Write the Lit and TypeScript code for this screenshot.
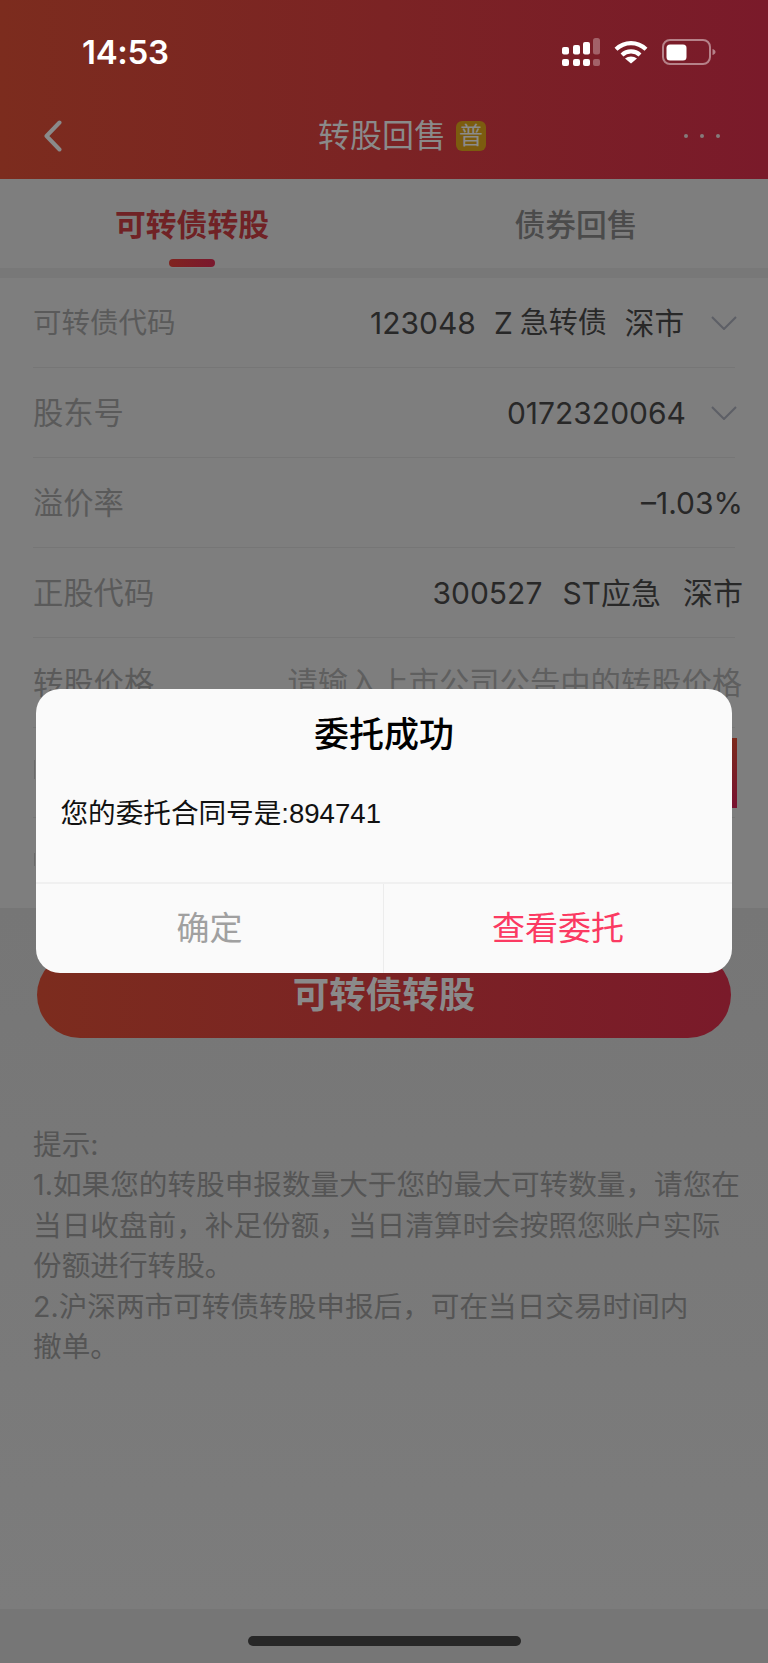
import { LitElement, html, css, svg } from "lit";
import { customElement } from "lit/decorators.js";

const chevron = html`<svg class="chev" width="26" height="14" viewBox="0 0 26 14"><path d="M1 1 L13 13 L25 1" fill="none" stroke="#5d5f66" stroke-width="2"/></svg>`;

const signalBars = [
  [0, 9, 7.5], [11, 7, 9.5], [21, 4, 12.5],
];
const signal = html`<svg width="38" height="28" viewBox="0 0 38 28">
  ${signalBars.map(([x, y, h]) => svg`<rect x=${x} y=${y} width="7" height=${h} rx="2" fill="#fff"/>`)}
  ${[0, 11, 21].map((x) => svg`<rect x=${x} y="21" width="7" height="7" rx="2" fill="#fff"/>`)}
  <rect x="31" y="0" width="7" height="16.5" rx="2.5" fill="#fff" fill-opacity=".3"/>
  <rect x="31" y="21" width="7" height="7" rx="2" fill="#fff" fill-opacity=".3"/>
</svg>`;

const wifi = html`<svg width="34" height="24" viewBox="0 0 34 24">
  <path d="M2 9.2 C10.5 1 23.5 1 32 9.2" fill="none" stroke="#fff" stroke-width="4.2"/>
  <path d="M8 15 C13 10.2 21 10.2 26 15" fill="none" stroke="#fff" stroke-width="4.2"/>
  <path d="M17 23.5 L11 18.6 C14.4 15.8 19.6 15.8 23 18.6 Z" fill="#fff"/>
</svg>`;

const battery = html`<svg width="54" height="26" viewBox="0 0 54 26">
  <rect x="1" y="1" width="47" height="24" rx="7" fill="none" stroke="#fff" stroke-opacity=".45" stroke-width="2"/>
  <rect x="4.5" y="5.5" width="20" height="16" rx="3.5" fill="#fff"/>
  <path d="M50.5 10 C52.5 10.6 53.5 11.6 53.5 13 C53.5 14.4 52.5 15.4 50.5 16 Z" fill="#fff" fill-opacity=".45"/>
</svg>`;

@customElement("app-root")
export class AppRoot extends LitElement {
  static styles = css`
    :host {
      display: block;
      position: relative;
      width: 768px;
      height: 1663px;
      overflow: hidden;
      background: #7a7a7a;
      font-family: "Inter", "Noto Sans CJK SC", sans-serif;
    }
    .page { display: flex; flex-direction: column; height: 100%; }
    .header {
      height: 179px;
      flex: none;
      background: linear-gradient(90deg, #7c2c1e, #7a1a2a);
    }
    .status {
      height: 104px;
      display: flex;
      align-items: center;
      justify-content: space-between;
      padding: 0 52px 0 82px;
      box-sizing: border-box;
    }
    .time {
      color: #fff;
      font-family: "Inter", sans-serif;
      font-size: 33px;
      font-weight: 600;
      letter-spacing: -0.3px;
      line-height: 40px;
    }
    .icons { display: flex; align-items: center; gap: 14px; }
    .icons svg { display: block; }
    .nav {
      height: 75px;
      padding: 0 48px 12px 44px;
      box-sizing: border-box;
      display: grid;
      grid-template-columns: 1fr auto 1fr;
      align-items: center;
    }
    .nav svg { display: block; }
    .title {
      position: relative;
      font-size: 32px;
      line-height: 44px;
      color: #8a8a8a;
    }
    .badge {
      position: absolute;
      left: calc(100% + 10px);
      top: 7px;
      width: 30px;
      height: 30px;
      border-radius: 6px;
      background: #7c5c0f;
      color: #8b8b8b;
      font-size: 24px;
      line-height: 30px;
      text-align: center;
    }
    .dots { justify-self: end; display: flex; gap: 12px; }
    .dots i { width: 4px; height: 4px; border-radius: 50%; background: #857b7b; }
    .tabs { height: 89px; flex: none; display: flex; background: #7e7e7e; }
    .tab {
      flex: 1;
      display: flex;
      flex-direction: column;
      align-items: center;
      padding-top: 25px;
      box-sizing: border-box;
      font-size: 30.8px;
      line-height: 42px;
      font-weight: 500;
      color: #4b4b4b;
    }
    .tab.on { color: #702225; font-weight: 700; }
    .tab u {
      display: block;
      width: 46px;
      height: 8px;
      margin-top: 13px;
      border-radius: 4px;
      background: linear-gradient(90deg, #80241f, #7a182e);
    }
    .band { height: 10px; flex: none; background: #787878; }
    .form { flex: none; background: #7e7e7e; padding: 0 33px; }
    .row {
      height: 90px;
      box-sizing: border-box;
      border-bottom: 1px solid #767676;
      display: flex;
      align-items: center;
      justify-content: space-between;
      font-size: 30px;
      line-height: 40px;
      white-space: nowrap;
    }
    .row.last { border-bottom: none; }
    .label { color: #5a5a5a; font-size: 30.3px; }
    .label.fit { font-size: 28.5px; }
    .value {
      color: #282828;
      display: flex;
      align-items: center;
      margin-right: -8px;
    }
    .value.select { margin-right: -2px; }
    .value .chev { margin-left: 25px; }
    .value.wide .chev { margin-left: 27px; }
    .wide .cjk { font-size: 29px; }
    .wide .cjk.market { font-size: 29.6px; margin-left: 18px; }
    .wide .z { margin-left: 18px; margin-right: 7px; }
    .sp20 { margin-left: 20px; }
    .sp22 { margin-left: 22px; }
    .placeholder { color: #5f5f5f; font-size: 30.3px; margin-right: -7px; }
    .tick { width: 1px; margin-left: 1px; background: #6a6a6a; }
    .tick.a { height: 19px; margin-top: -6px; }
    .tick.b { height: 13px; margin-top: -8px; }
    .mini {
      width: 120px;
      height: 70px;
      margin-right: -2px;
      background: linear-gradient(180deg, #7c2a1c, #781230);
    }
    .lower {
      flex: 1;
      background: linear-gradient(180deg, #767676, #7c7c7c);
      padding: 44px 30px 0 33px;
      box-sizing: border-box;
    }
    .submit {
      width: 694px;
      height: 86px;
      margin-left: 4px;
      border-radius: 43px;
      background: linear-gradient(90deg, #7c2c1e, #7a1a2a);
      color: #8a8a8a;
      font-size: 36.5px;
      font-weight: 700;
      line-height: 86px;
      text-align: center;
    }
    .notes {
      margin-top: 87px;
      color: #555;
      font-size: 28.63px;
      line-height: 40.4px;
      white-space: nowrap;
    }
    .home {
      height: 54px;
      flex: none;
      background: #767676;
      padding-top: 27px;
      box-sizing: border-box;
      display: flex;
      justify-content: center;
    }
    .home i { width: 273px; height: 10px; border-radius: 5px; background: #272727; }
    .dialog {
      position: absolute;
      left: 36px;
      top: 689px;
      width: 696px;
      height: 284px;
      border-radius: 24px;
      background: #fafafa;
      display: flex;
      flex-direction: column;
      overflow: hidden;
    }
    .d-title {
      padding-top: 22px;
      font-size: 35px;
      line-height: 46px;
      font-weight: 500;
      color: #000;
      text-align: center;
    }
    .d-body {
      flex: 1;
      padding: 37px 24.5px 0;
      font-family: "Liberation Sans", "Noto Sans CJK SC", sans-serif;
      font-size: 27.6px;
      line-height: 40px;
      color: #111;
    }
    .d-actions {
      height: 91px;
      flex: none;
      display: flex;
      border-top: 2px solid #f0f0f0;
      box-sizing: border-box;
      font-size: 33px;
      line-height: 88px;
      text-align: center;
    }
    .d-actions div { flex: 1; }
    .d-actions .ok { color: #a0a0a0; border-right: 1px solid #ececec; width: 348px; flex: none; box-sizing: border-box; }
    .d-actions .view { color: #fb3a62; }
  `;

  render() {
    return html`
      <div class="page">
        <div class="header">
          <div class="status">
            <div class="time">14:53</div>
            <div class="icons">${signal}${wifi}${battery}</div>
          </div>
          <div class="nav">
            <svg width="18" height="32" viewBox="0 0 18 32"><path d="M15.5 2.5 L2.5 16 L15.5 29.5" fill="none" stroke="#8a8a8a" stroke-width="4" stroke-linecap="round" stroke-linejoin="round"/></svg>
            <div class="title">转股回售<span class="badge">普</span></div>
            <div class="dots"><i></i><i></i><i></i></div>
          </div>
        </div>
        <div class="tabs">
          <div class="tab on">可转债转股<u></u></div>
          <div class="tab">债券回售</div>
        </div>
        <div class="band"></div>
        <div class="form">
          <div class="row">
            <span class="label fit">可转债代码</span>
            <span class="value select wide">123048<span class="z">Z</span><span class="cjk">急转债</span><span class="cjk market">深市</span>${chevron}</span>
          </div>
          <div class="row">
            <span class="label">股东号</span>
            <span class="value select">0172320064${chevron}</span>
          </div>
          <div class="row">
            <span class="label">溢价率</span>
            <span class="value">–1.03%</span>
          </div>
          <div class="row">
            <span class="label">正股代码</span>
            <span class="value">300527<span class="sp20">ST应急</span><span class="sp22">深市</span></span>
          </div>
          <div class="row">
            <span class="label">转股价格</span>
            <span class="placeholder">请输入上市公司公告中的转股价格</span>
          </div>
          <div class="row">
            <span class="tick a"></span>
            <span class="mini"></span>
          </div>
          <div class="row last">
            <span class="tick b"></span>
          </div>
        </div>
        <div class="lower">
          <div class="submit">可转债转股</div>
          <div class="notes">
            <div>提示:</div>
            <div>1.如果您的转股申报数量大于您的最大可转数量，请您在</div>
            <div>当日收盘前，补足份额，当日清算时会按照您账户实际</div>
            <div>份额进行转股。</div>
            <div>2.沪深两市可转债转股申报后，可在当日交易时间内</div>
            <div>撤单。</div>
          </div>
        </div>
        <div class="home"><i></i></div>
      </div>
      <div class="dialog">
        <div class="d-title">委托成功</div>
        <div class="d-body">您的委托合同号是:894741</div>
        <div class="d-actions">
          <div class="ok">确定</div>
          <div class="view">查看委托</div>
        </div>
      </div>
    `;
  }
}
